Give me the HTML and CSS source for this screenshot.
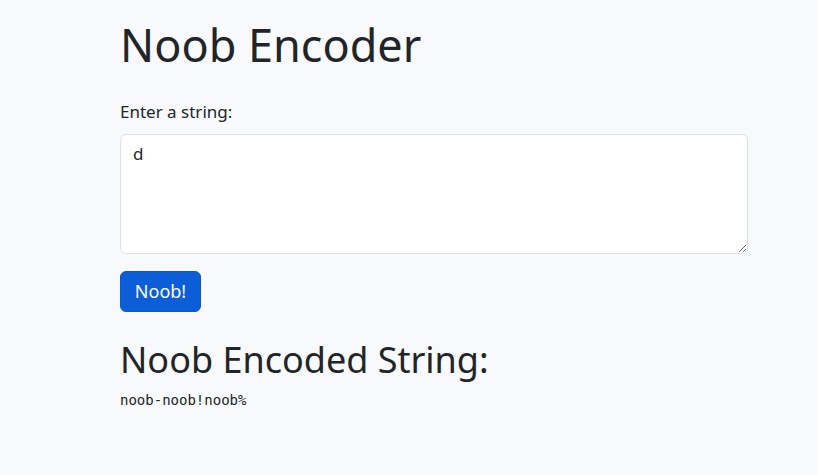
FILE: index.html
```html
<!DOCTYPE html>
<html lang="en">
<head>
<meta charset="utf-8">
<title>Noob Encoder</title>
<link rel="stylesheet" href="styles.css">
</head>
<body>
<main class="container">
  <h1 class="title">Noob Encoder</h1>
  <form class="encoder">
    <label class="form-label" for="input">Enter a string:</label>
    <textarea id="input" class="form-control">d</textarea>
    <button type="button" class="btn">Noob!</button>
  </form>
  <h2 class="result-title">Noob Encoded String:</h2>
  <pre class="result">noob-noob!noob%</pre>
</main>
</body>
</html>
```
FILE: styles.css
```css
* { box-sizing: border-box; }
html, body { margin: 0; padding: 0; }
body {
  background: #f8f9fa;
  color: #212529;
  font-family: "Noto Sans", "Open Sans", sans-serif;
  font-size: 16px;
  line-height: 1.5;
}
.container {
  width: 628px;
  margin: 0 0 0 120px;
  padding-top: 18px;
}
.title {
  margin: 0;
  font-size: 45px;
  font-weight: 400;
  line-height: 1.2;
}
.encoder {
  display: flex;
  flex-direction: column;
  align-items: flex-start;
  margin-top: 28px;
}
.form-label {
  display: block;
  font-size: 17px;
  line-height: 24px;
  margin-bottom: 10px;
}
.form-control {
  display: block;
  width: 100%;
  height: 120px;
  padding: 6px 12px;
  font: inherit;
  font-size: 17px;
  color: #212529;
  background: #fff;
  border: 1px solid #dee2e6;
  border-radius: 6px;
  resize: vertical;
}
.btn {
  margin-top: 17px;
  height: 41px;
  width: 81px;
  padding: 0 10px;
  font: inherit;
  font-size: 18px;
  color: #fff;
  background: #0b5ed7;
  border: 1px solid #0a58ca;
  border-radius: 6px;
}
.result-title {
  margin: 26px 0 0;
  font-size: 36px;
  font-weight: 400;
  line-height: 1.2;
}
.result {
  margin: 9px 0 0;
  font-family: "DejaVu Sans Mono", "Liberation Mono", monospace;
  font-size: 14px;
  line-height: 1.5;
}
```
